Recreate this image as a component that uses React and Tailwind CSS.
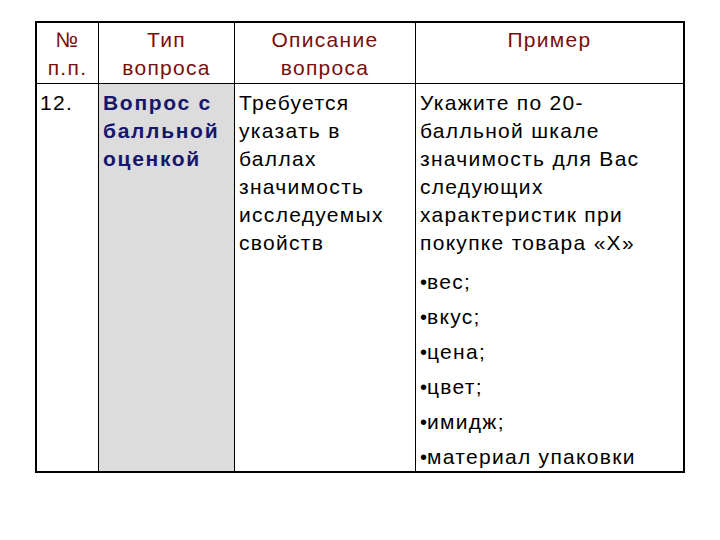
const HEAD = "text-[#7a0c0c]";

const bullets = ["вес;", "вкус;", "цена;", "цвет;", "имидж;", "материал упаковки"];

export default function App() {
  return (
    <div className="w-[720px] h-[540px] bg-white pt-[21px] pl-[35px] font-['Liberation_Sans',Arial,sans-serif] text-[21px] leading-[28px] tracking-[1.3px] text-black">
      <div className="w-[650px] border-2 border-black grid grid-cols-[62px_136px_181px_267px] grid-rows-[61px_387px]">
        {/* header row */}
        <div className={`border-r border-b border-black text-center pt-[3px] ${HEAD}`}>
          №<br />п.п.
        </div>
        <div className={`border-r border-b border-black text-center pt-[3px] ${HEAD}`}>
          Тип<br />вопроса
        </div>
        <div className={`border-r border-b border-black text-center pt-[3px] ${HEAD}`}>
          Описание<br />вопроса
        </div>
        <div className={`border-b border-black text-center pt-[3px] ${HEAD}`}>
          Пример
        </div>

        {/* body row */}
        <div className="border-r border-black pl-[3px] pt-[5px]">12.</div>
        <div className="border-r border-black bg-[#dcdcdc] pl-[4px] pt-[5px] font-bold text-[#16166a] tracking-[1.7px] whitespace-nowrap">
          Вопрос с<br />балльной<br />оценкой
        </div>
        <div className="border-r border-black pl-[4px] pt-[5px]">
          Требуется<br />указать в<br />баллах<br />значимость<br />исследуемых<br />свойств
        </div>
        <div className="pl-[4px] pt-[5px] whitespace-nowrap">
          <p>
            Укажите по 20-<br />балльной шкале<br />значимость для Вас<br />следующих<br />характеристик при<br />покупке товара «Х»
          </p>
          {bullets.map((b, i) => (
            <p key={b} className={i === 0 ? "mt-[11px]" : "mt-[7px]"}>
              <span className="text-[20px] leading-none tracking-normal">•</span>
              {b}
            </p>
          ))}
        </div>
      </div>
    </div>
  );
}
